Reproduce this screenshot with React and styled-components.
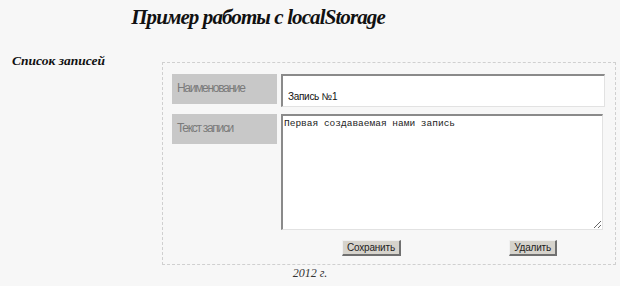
import styled, { createGlobalStyle } from "styled-components";

const GlobalStyle = createGlobalStyle`
  html, body {
    margin: 0;
    padding: 0;
    background-color: #f7f7f7;
    font-family: "Liberation Serif", "Times New Roman", serif;
  }
`;

const Page = styled.div`
  width: 620px;
  height: 286px;
  overflow: hidden;
`;

const Header = styled.h1`
  width: 516px;
  margin: 0;
  padding-top: 5px;
  height: 46px;
  box-sizing: border-box;
  text-align: center;
  font-size: 21px;
  letter-spacing: -0.9px;
  font-style: italic;
  font-weight: bold;
  color: #111;
`;

const Body = styled.div`
  display: flex;
  align-items: flex-start;
`;

const Sidebar = styled.div`
  width: 162px;
  padding-left: 12px;
  padding-top: 7px;
  box-sizing: border-box;
  font-size: 13.5px;
  font-style: italic;
  font-weight: bold;
  color: #111;
`;

const Panel = styled.div`
  width: 454px;
  height: 203px;
  margin-top: 16px;
  box-sizing: border-box;
  border: 1px dashed #d0d0d0;
  padding: 11px 10px 0 9px;
`;

const FormGrid = styled.div`
  display: grid;
  grid-template-columns: 105px 324px;
  column-gap: 4px;
  row-gap: 7px;
`;

const Label = styled.div`
  height: 30px;
  background-color: #c8c8c8;
  color: #7a7a7a;
  font-family: "Liberation Sans", Arial, sans-serif;
  font-size: 12px;
  letter-spacing: -1.3px;
  padding: 7px 0 0 5px;
  box-sizing: border-box;
`;

const TextInput = styled.input`
  height: 33px;
  width: 324px;
  box-sizing: border-box;
  margin: 0;
  background: #fff;
  border-style: solid;
  border-width: 2px 1px 1px 2px;
  border-color: #8a8a8a #e2e2e2 #e2e2e2 #8a8a8a;
  padding: 10px 0 0 5px;
  font-family: "Liberation Sans", Arial, sans-serif;
  font-size: 10px;
  letter-spacing: -0.3px;
  color: #111;
  outline: none;
`;

const TextArea = styled.textarea`
  width: 322px;
  height: 116px;
  box-sizing: border-box;
  margin: 0;
  background: #fff;
  border-style: solid;
  border-width: 2px 1px 1px 2px;
  border-color: #8a8a8a #e2e2e2 #e2e2e2 #8a8a8a;
  padding: 2px 0 0 1px;
  font-family: "Liberation Mono", "Courier New", monospace;
  font-size: 9.5px;
  color: #222;
  outline: none;
`;

const ButtonRow = styled.div`
  grid-column: 2;
  display: flex;
  justify-content: space-between;
  padding: 3px 48px 0 61px;
`;

const Button = styled.button`
  height: 16px;
  padding: 0 4px;
  background-color: #d6d3cc;
  border-style: solid;
  border-width: 1px 2px 2px 1px;
  border-color: #f0f0f0 #707070 #707070 #f0f0f0;
  font-family: "Liberation Sans", Arial, sans-serif;
  font-size: 10px;
  letter-spacing: -0.2px;
  line-height: 12px;
  color: #222;
`;

const Footer = styled.div`
  text-align: center;
  padding-top: 1px;
  font-size: 12px;
  font-style: italic;
  color: #333;
`;

export default function App() {
  return (
    <Page>
      <GlobalStyle />
      <Header>Пример работы с localStorage</Header>
      <Body>
        <Sidebar>Список записей</Sidebar>
        <Panel>
          <FormGrid>
            <Label>Наименование</Label>
            <TextInput type="text" defaultValue="Запись №1" />
            <Label>Текст записи</Label>
            <TextArea defaultValue="Первая создаваемая нами запись" />
            <ButtonRow>
              <Button>Сохранить</Button>
              <Button>Удалить</Button>
            </ButtonRow>
          </FormGrid>
        </Panel>
      </Body>
      <Footer>2012 г.</Footer>
    </Page>
  );
}
